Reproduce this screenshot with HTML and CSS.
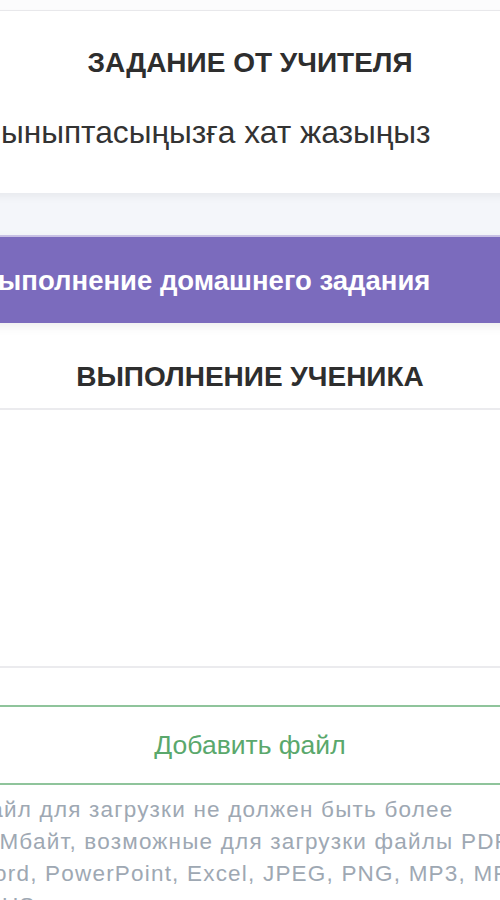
FILE: index.html
```html
<!DOCTYPE html>
<html lang="ru">
<head>
<meta charset="utf-8">
<title>Задание</title>
<link rel="stylesheet" href="styles.css">
</head>
<body>
<div class="page">
  <div class="top"></div>
  <section class="task">
    <h2 class="title">ЗАДАНИЕ ОТ УЧИТЕЛЯ</h2>
    <p class="task-text">Сыныптасыңызға хат жазыңыз</p>
  </section>
  <div class="gap"></div>
  <div class="purple">Выполнение домашнего задания</div>
  <section class="student">
    <h2 class="title">ВЫПОЛНЕНИЕ УЧЕНИКА</h2>
  </section>
  <div class="answer"></div>
  <div class="btn-wrap">
    <div class="add-btn">Добавить файл</div>
  </div>
  <p class="info">Файл для загрузки не должен быть более 15Мбайт, возможные для загрузки файлы PDF, Word, PowerPoint, Excel, JPEG, PNG, MP3, MP4, PLUS</p>
</div>
</body>
</html>
```

FILE: styles.css
```css
html, body {
  margin: 0;
  padding: 0;
  background: #ffffff;
  overflow: hidden;
  height: 900px;
}
body {
  font-family: "Liberation Sans", Arial, sans-serif;
  color: #333333;
}
.page {
  width: 588px;
  margin-left: -44px;
}
.top {
  height: 10px;
  background: #fcfcfd;
  border-bottom: 1px solid #e9e9ec;
}
.task {
  height: 182px;
  background: #ffffff;
  padding: 0 22px;
  box-sizing: border-box;
  display: flex;
  flex-direction: column;
  box-shadow: 0 4px 8px rgba(0,0,0,0.05);
  position: relative;
}
.title {
  margin: 0;
  font-size: 28px;
  font-weight: bold;
  text-align: center;
  color: #2e2e2e;
  line-height: 32px;
}
.task .title {
  margin-top: 36px;
}
.task-text {
  margin: 35px 0 0 0;
  font-size: 31.7px;
  line-height: 36px;
  color: #333333;
}
.gap {
  height: 42px;
  background: #f4f6fa;
  border-bottom: 2px solid #cbc4e8;
}
.purple {
  height: 86px;
  background: #7b6bbd;
  color: #ffffff;
  font-weight: bold;
  font-size: 27.5px;
  display: flex;
  align-items: center;
  padding: 2px 22px 0 22px;
  box-sizing: border-box;
  box-shadow: 0 3px 10px rgba(0,0,0,0.08);
  position: relative;
}
.student {
  height: 87px;
  box-sizing: border-box;
  padding-top: 38px;
  border-bottom: 2px solid #ebebee;
}
.answer {
  height: 256px;
  border-bottom: 2px solid #ebebee;
}
.btn-wrap {
  padding-top: 37px;
}
.add-btn {
  height: 80px;
  box-sizing: border-box;
  border-top: 2px solid #8fc49b;
  border-bottom: 2px solid #8fc49b;
  display: flex;
  align-items: center;
  justify-content: center;
  color: #5aa86c;
  font-size: 26.5px;
}
.info {
  margin: 9px 0 0 0;
  padding: 0 0 0 16px;
  font-size: 22.5px;
  letter-spacing: 1.2px;
  line-height: 32px;
  color: #9ea8b3;
}
```
